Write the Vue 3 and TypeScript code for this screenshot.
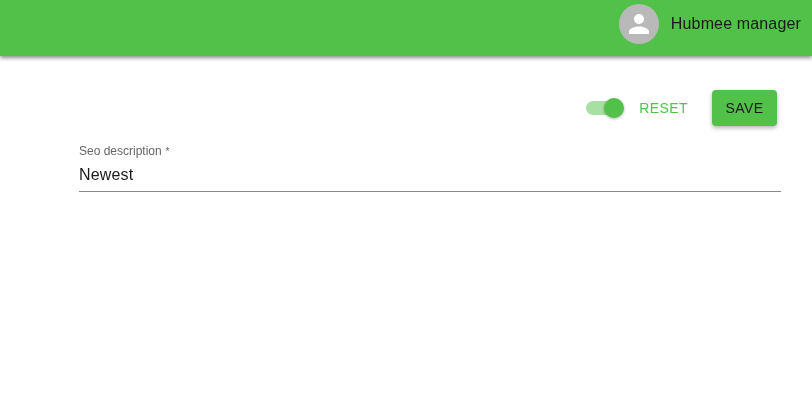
<script setup lang="ts">
const title = 'Hubmee manager'
const fieldLabel = 'Seo description'
const fieldValue = 'Newest'
</script>

<template>
  <div class="page">
    <header class="app-bar">
      <div class="avatar">
        <svg viewBox="0 0 24 24" width="30" height="30" fill="#fff">
          <path d="M12 12c2.21 0 4-1.79 4-4s-1.79-4-4-4-4 1.79-4 4 1.79 4 4 4zm0 2c-2.67 0-8 1.34-8 4v2h16v-2c0-2.66-5.33-4-8-4z" />
        </svg>
      </div>
      <span class="app-bar__title">{{ title }}</span>
    </header>

    <main class="content">
      <div class="actions">
        <span class="switch">
          <span class="switch__track"></span>
          <span class="switch__thumb"></span>
        </span>
        <button class="btn btn--text" type="button">Reset</button>
        <button class="btn btn--filled" type="button">Save</button>
      </div>

      <div class="field">
        <label class="field__label">{{ fieldLabel }}<span class="field__star"> *</span></label>
        <div class="field__value">{{ fieldValue }}</div>
      </div>
    </main>
  </div>
</template>

<style>
html,
body {
  margin: 0;
  background: #fff;
}
</style>

<style scoped>
.page {
  width: 812px;
  height: 401px;
  overflow: hidden;
  font-family: "Liberation Sans", Arial, sans-serif;
  color: #1a1a1a;
  will-change: opacity;
}

.app-bar {
  display: flex;
  align-items: center;
  justify-content: flex-end;
  gap: 12px;
  box-sizing: border-box;
  height: 56px;
  padding: 0 11px 8px 0;
  background: #52c149;
  box-shadow: 0 2px 4px rgba(0, 0, 0, 0.45);
}

.avatar {
  display: flex;
  align-items: center;
  justify-content: center;
  width: 40px;
  height: 40px;
  border-radius: 50%;
  background: #b9b9b9;
}

.app-bar__title {
  font-size: 16px;
  letter-spacing: 0.15px;
  color: #1a1a1a;
}

.content {
  display: flex;
  flex-direction: column;
  padding: 34px 31px 0 79px;
}

.actions {
  display: flex;
  align-items: center;
  justify-content: flex-end;
  padding-right: 4px;
}

.switch {
  position: relative;
  display: block;
  width: 38px;
  height: 20px;
  margin-right: 7px;
}

.switch__track {
  position: absolute;
  left: 0;
  top: 3px;
  width: 34px;
  height: 14px;
  border-radius: 7px;
  background: #a8e0a4;
}

.switch__thumb {
  position: absolute;
  right: 0;
  top: 0;
  width: 20px;
  height: 20px;
  border-radius: 50%;
  background: #52c149;
  box-shadow: 0 1px 3px rgba(0, 0, 0, 0.3);
}

.btn {
  border: none;
  font-family: inherit;
  font-size: 14px;
  font-weight: 400;
  letter-spacing: 0.4px;
  text-transform: uppercase;
  height: 36px;
  border-radius: 4px;
  cursor: pointer;
}

.btn--text {
  padding: 0 8px;
  margin-right: 16px;
  background: transparent;
  color: #52c149;
}

.btn--filled {
  width: 65px;
  padding: 0;
  background: #52c149;
  color: #1a1a1a;
  box-shadow: 0 2px 4px rgba(0, 0, 0, 0.3);
}

.field {
  display: flex;
  flex-direction: column;
  margin-top: 16px;
  border-bottom: 1px solid #8a8a8a;
}

.field__label {
  font-size: 12px;
  line-height: 18px;
  color: #666;
}

.field__star {
  font-size: 10px;
  margin-left: 1px;
}

.field__value {
  font-size: 16px;
  line-height: 24px;
  padding-top: 2px;
  padding-bottom: 4px;
  letter-spacing: 0.15px;
  color: #1a1a1a;
}
</style>
